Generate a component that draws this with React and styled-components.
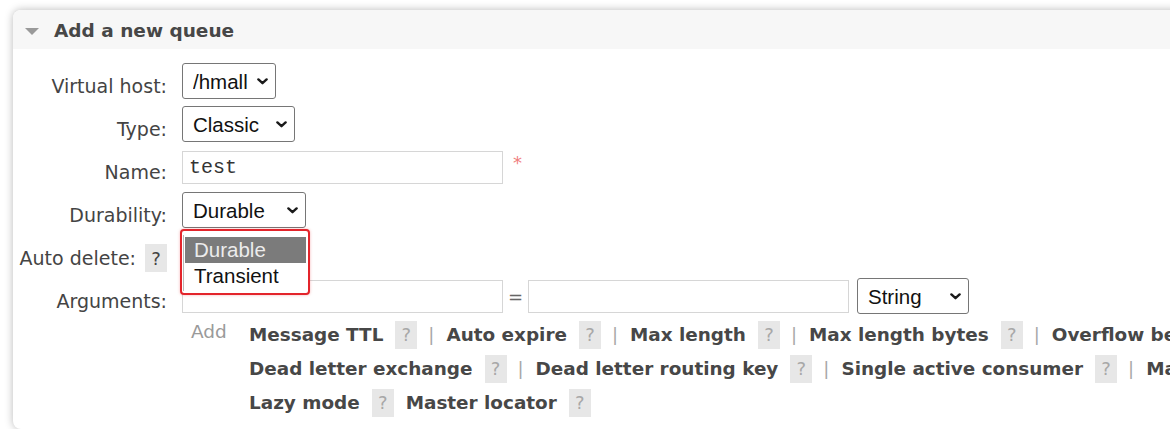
import React from 'react'
import styled, { createGlobalStyle } from 'styled-components'

const GlobalStyle = createGlobalStyle`
    html, body {
        margin: 0;
        padding: 0;
        background: #ffffff;
        overflow: hidden;
    }
    body {
        font-family: "DejaVu Sans", Verdana, sans-serif;
        color: #444444;
    }
`

const linkLines = [
    [
        { name: 'Message TTL' },
        { name: 'Auto expire' },
        { name: 'Max length' },
        { name: 'Max length bytes' },
        { name: 'Overflow behaviour' },
    ],
    [
        { name: 'Dead letter exchange' },
        { name: 'Dead letter routing key' },
        { name: 'Single active consumer' },
        { name: 'Maximum priority' },
    ],
    [{ name: 'Lazy mode' }, { name: 'Master locator' }],
]

const Chevron = () => (
    <svg width="11" height="7" viewBox="0 0 11 7">
        <path d="M1.4 1.4 L5.5 5.2 L9.6 1.4" fill="none" stroke="#1a1a1a" strokeWidth="2.4" strokeLinecap="round" strokeLinejoin="round" />
    </svg>
)

const SelectBox = ({ width, value, children }) => (
    <SelectWrap $w={width}>
        <StyledSelect defaultValue={value}>
            <option>{value}</option>
        </StyledSelect>
        <ChevronSlot>
            <Chevron />
        </ChevronSlot>
        {children}
    </SelectWrap>
)

const App = () => {
    return (
        <>
            <GlobalStyle />
            <Card>
                <Header>
                    <Triangle />
                    <Title>Add a new queue</Title>
                </Header>
                <Form>
                    <Row>
                        <Label>Virtual host:</Label>
                        <SelectBox width={94} value="/hmall" />
                    </Row>
                    <Row>
                        <Label>Type:</Label>
                        <SelectBox width={113} value="Classic" />
                    </Row>
                    <Row>
                        <Label>Name:</Label>
                        <Field>
                            <TextInput $w={321} $mono defaultValue="test" />
                            <Required>*</Required>
                        </Field>
                    </Row>
                    <Row>
                        <Label>Durability:</Label>
                        <SelectBox width={124} value="Durable">
                            <Popup>
                                <PopupList>
                                    <PopupOption $active>Durable</PopupOption>
                                    <PopupOption>Transient</PopupOption>
                                </PopupList>
                            </Popup>
                        </SelectBox>
                    </Row>
                    <Row>
                        <Label>
                            Auto delete:<Help $dark>?</Help>
                        </Label>
                        <SelectBox width={80} value="No" />
                    </Row>
                    <Row>
                        <Label>Arguments:</Label>
                        <Field>
                            <TextInput $w={321} />
                            <Equals>=</Equals>
                            <TextInput $w={321} />
                            <SelectGap>
                                <SelectBox width={112} value="String" />
                            </SelectGap>
                        </Field>
                    </Row>
                    <AddRow>
                        <AddText>Add</AddText>
                        <Lines>
                            {linkLines.map((line, i) => (
                                <Line key={i}>
                                    {line.map((item, j) => (
                                        <React.Fragment key={item.name}>
                                            <LinkText $spaced={i === 2 && j > 0}>{item.name}</LinkText>
                                            <Help>?</Help>
                                            {i < 2 && <Pipe>|</Pipe>}
                                        </React.Fragment>
                                    ))}
                                </Line>
                            ))}
                        </Lines>
                    </AddRow>
                </Form>
            </Card>
        </>
    )
}

const Card = styled.div`
    margin: 10px 0 0 13px;
    width: 1420px;
    background: #ffffff;
    border-radius: 8px;
    box-shadow: 0 0 9px rgba(0, 0, 0, 0.28);
`

const Header = styled.div`
    height: 39px;
    box-sizing: border-box;
    padding: 2px 0 0 12px;
    display: flex;
    align-items: center;
    gap: 15px;
    background: #f7f7f7;
    border-radius: 8px 8px 0 0;
`

const Triangle = styled.span`
    width: 0;
    height: 0;
    border-left: 7.5px solid transparent;
    border-right: 7.5px solid transparent;
    border-top: 7px solid #9a9a9a;
    margin-top: 1px;
`

const Title = styled.h2`
    margin: 0;
    font-size: 18.5px;
    font-weight: bold;
    color: #474747;
`

const Form = styled.div`
    padding: 10.5px 0 9px 10px;
`

const Row = styled.div`
    display: grid;
    grid-template-columns: 144px 1fr;
    column-gap: 15px;
    align-items: center;
    height: 43px;
`

const Label = styled.div`
    display: flex;
    align-items: center;
    justify-content: flex-end;
    padding-top: 10px;
    font-size: 19px;
    color: #444444;
    white-space: nowrap;
`

const SelectWrap = styled.div`
    position: relative;
    width: ${(p) => p.$w}px;
    height: 36px;
`

const StyledSelect = styled.select`
    appearance: none;
    width: 100%;
    height: 100%;
    box-sizing: border-box;
    padding: 0 0 0 10px;
    border: 1px solid #767676;
    border-radius: 3px;
    background: #ffffff;
    font-family: "Liberation Sans", Arial, sans-serif;
    font-size: 20.5px;
    color: #111111;
`

const ChevronSlot = styled.span`
    position: absolute;
    right: 8px;
    top: 15px;
    display: flex;
    pointer-events: none;
`

const Popup = styled.div`
    position: absolute;
    left: -2px;
    top: 37px;
    width: 130px;
    height: 66px;
    box-sizing: border-box;
    border: 2px solid #e3242b;
    border-radius: 4px;
    background: #ffffff;
    box-shadow: 0 0 3px rgba(227, 36, 43, 0.35);
    padding: 4px 2px 0 1px;
    z-index: 2;
`

const PopupList = styled.div`
    border-left: 1px solid #b8b8b8;
    padding: 2px 0 0 1px;
    height: 54px;
`

const PopupOption = styled.div`
    height: 25.5px;
    line-height: 25px;
    padding-left: 9px;
    font-family: "Liberation Sans", Arial, sans-serif;
    font-size: 20.5px;
    background: ${(p) => (p.$active ? '#7b7b7b' : 'transparent')};
    color: ${(p) => (p.$active ? '#ececec' : '#111111')};
`

const Field = styled.div`
    display: flex;
    align-items: center;
`

const TextInput = styled.input`
    width: ${(p) => p.$w}px;
    height: 33px;
    box-sizing: border-box;
    border: 1px solid #d6d6d6;
    padding: 0 6px;
    font-family: ${(p) => (p.$mono ? '"Liberation Mono", "Courier New", monospace' : '"Liberation Sans", Arial, sans-serif')};
    font-size: 20px;
    color: #333333;
    outline: none;
`

const Required = styled.span`
    margin: -10px 0 0 10px;
    font-size: 18px;
    color: #f08080;
`

const Equals = styled.span`
    width: 25px;
    text-align: center;
    font-size: 18px;
    color: #666666;
`

const SelectGap = styled.div`
    margin-left: 8px;
`

const Help = styled.span`
    display: inline-flex;
    align-items: center;
    justify-content: center;
    flex-shrink: 0;
    width: 22px;
    height: 28px;
    margin-left: ${(p) => (p.$dark ? '9px' : '12px')};
    background: #e7e7e7;
    font-size: 18px;
    font-weight: normal;
    color: ${(p) => (p.$dark ? '#444444' : '#a8a8a8')};
`

const AddRow = styled.div`
    display: grid;
    grid-template-columns: 144px 67px 1fr;
    column-gap: 15px;
    & > :first-child {
        grid-column: 2;
    }
`

const AddText = styled.div`
    padding-left: 9px;
    line-height: 28px;
    font-size: 18.5px;
    color: #9a9a9a;
`

const Lines = styled.div`
    margin-left: -15px;
`

const Line = styled.div`
    display: flex;
    align-items: center;
    height: 34px;
    white-space: nowrap;
`

const LinkText = styled.span`
    margin-left: ${(p) => (p.$spaced ? '12px' : '0')};
    font-size: 18.4px;
    font-weight: bold;
    color: #474747;
`

const Pipe = styled.span`
    margin: 0 12px 0 11px;
    font-size: 18px;
    color: #a8a8a8;
`

export default App
